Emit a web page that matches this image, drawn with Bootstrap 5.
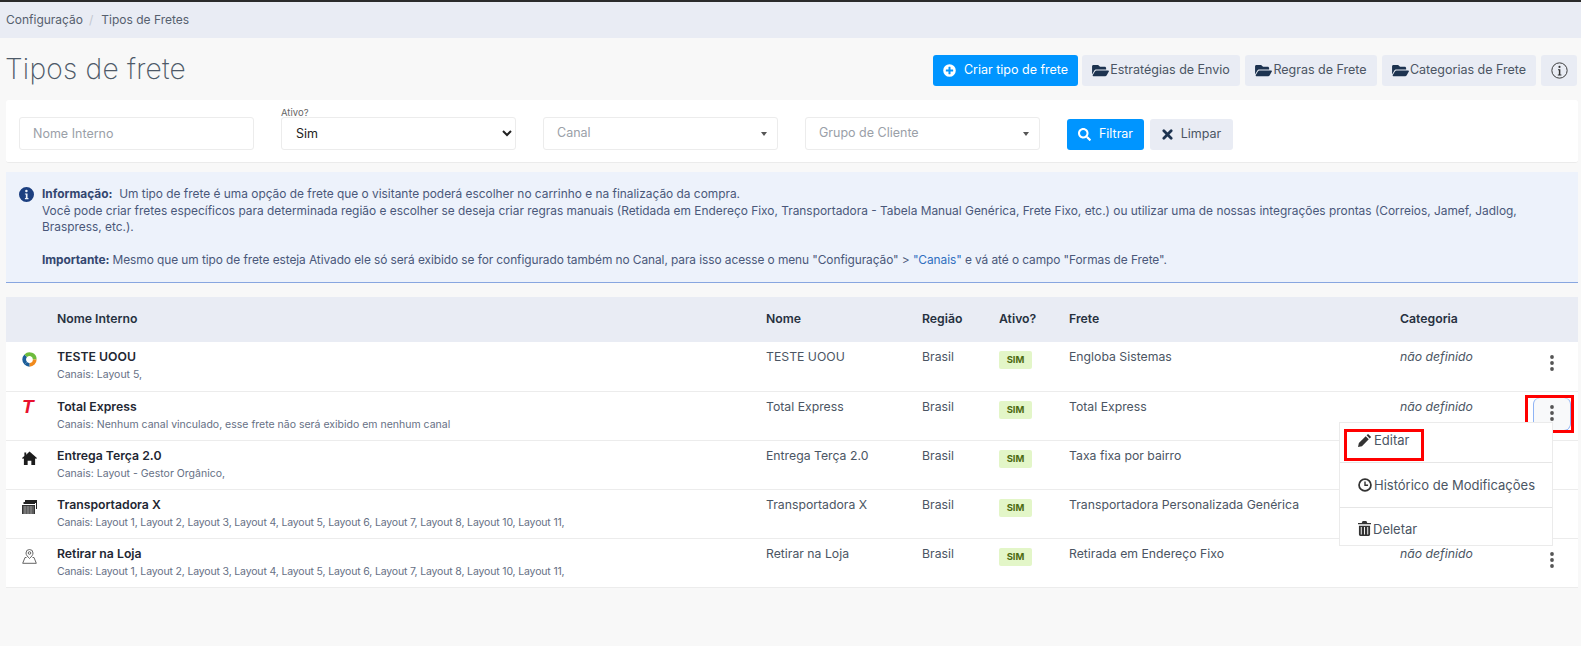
<!DOCTYPE html>
<html lang="pt-BR">
<head>
<meta charset="utf-8">
<title>Tipos de frete</title>
<link href="https://cdn.jsdelivr.net/npm/bootstrap@5.3.0/dist/css/bootstrap.min.css" rel="stylesheet">
<style>
html,body{height:100%}
body{background:#f8f8f8;font-family:Inter,"Noto Sans",sans-serif;font-size:12.25px;color:#4b5563;border-top:2px solid #2b2b2b;overflow:hidden}
svg{flex:none}
svg:not([fill]){fill:currentColor}
.crumbs{background:#e9ecf4;height:36px;padding:0 6px;font-size:12px;margin:0}
.crumbs .breadcrumb-item,.crumbs .breadcrumb-item a{color:#56606e;text-decoration:none}
.crumbs .breadcrumb-item+.breadcrumb-item{padding-left:6px}
.crumbs .breadcrumb-item+.breadcrumb-item::before{color:#c4c8d0;padding-right:8px}
.page{padding:0 3px 0 6px}
.head-row{height:62px}
.head-title{font-family:Inter,sans-serif;font-weight:200;font-size:28.2px;color:#4e5a68;margin:2px 0 0 -1px;letter-spacing:.2px}
.head-btns{gap:5px;margin:3px 1px 0 0}
.act{height:31px;font-size:12.5px;border:0;border-radius:3px;padding:0;display:flex;align-items:center;justify-content:center;gap:1px;background:#e9ecf4;color:#4b5563}
.act:hover,.act:focus{background:#e9ecf4;color:#4b5563}
.act svg{color:#1d3350}
.act-blue,.act-blue:hover,.act-blue:focus{background:#0095ff;color:#fff;gap:8px}
.act-blue svg{color:#fff}
.w-a{width:145px;margin-right:-1px}.w-b{width:158px}.w-c{width:132px}.w-d{width:154px}.w-e{width:36px}
.w-f{width:77px}.w-g{width:83px;gap:8px}
.filter-btns{gap:6px;margin-top:2px}
.filter-box{background:#fff;height:63px;border-bottom:1px solid #ebebeb;border-radius:3px;padding:17px 13px 0;position:relative;gap:27px}
.fld{width:235px;height:33px;border:1px solid #ececec;border-radius:3px;font-size:12.5px;padding:0 10px 0 13px;box-shadow:none}
.fld-ph{color:#9aa0a8}
.fld-ph::placeholder{color:#9aa0a8}
select.fld{appearance:auto;background-image:none;color:#222;padding-left:10px}
.caret-dn{width:0;height:0;border-left:3px solid transparent;border-right:3px solid transparent;border-top:4px solid #555}
.fld-wrap{position:relative}
.fld-label{position:absolute;left:0;top:-9px;font-size:9.5px;line-height:10px;color:#666}
.info-box{background:#edf2fb;margin-top:9px;height:111px;border-bottom:1px solid #88a6e0;padding:14px 13px 0 36px;position:relative;font-size:11.9px;line-height:16.5px;color:#4a587a}
.info-box b{color:#33466f;font-weight:700}
.info-box a{color:#2f6fc0;text-decoration:none}
.info-ico{position:absolute;left:13px;top:15px;color:#1c3f80}
.info-gap{height:16.5px}
.info-last{letter-spacing:-.07px}
.ftable{table-layout:fixed;width:1572px;margin:14px 0 0;background:#fff;color:#4b5563;--bs-table-bg:transparent}
.ftable th{background:#e9ecf4;height:45px;padding:0;vertical-align:middle;font-weight:600;font-size:12.25px;color:#27313f;border:0}
.ftable td{height:49px;padding:6px 0 0;vertical-align:top;border-bottom:1px solid #ececec;font-size:12.25px;line-height:18px;color:#4b5563}
.c1{width:51px}.c2{width:709px}.c3{width:156px}.c4{width:77px}.c5{width:70px}.c6{width:331px}.c7{width:134px}.c8{width:44px}
.ftable td.row-ico{padding-left:16px;color:#1c1c1c}
.row-name{font-weight:600;color:#1f2733;display:block}
.row-sub{font-size:10.5px;line-height:14px;color:#667085;display:block;margin-top:2px}
.row-sub-tight{letter-spacing:-.16px}
.sim{display:inline-flex;align-items:center;justify-content:center;width:33px;height:18px;margin-top:3px;background:#e3f6c8;color:#4e6b12;font-size:9.5px;font-weight:700;border-radius:2px}
.logo-t{font-family:"Liberation Sans",sans-serif;font-style:italic;font-weight:700;font-size:19px;line-height:18px;color:#e8112d}
.kebab{display:flex;align-items:center;justify-content:center;width:36px;height:32px;background:transparent;border:0;padding:0 0 2px;color:#555}
.kebab-on{background:#f8f9fa;border-radius:6px;box-shadow:-1px 0 0 #8fb4f5,0 1px 0 #8fb4f5,1px 0 0 #8fb4f5}
.act-wrap{position:relative;width:36px}
.red-a{position:absolute;left:-9px;top:-3px;width:49px;height:38px;border:3px solid #f00;pointer-events:none}
.opts{position:absolute;right:17px;top:24px;left:auto;width:214px;padding:0;margin:0;border:1px solid #ebebeb;border-radius:0;z-index:5;font-size:13px}
.opts .dropdown-item{display:flex;align-items:center;gap:2px;padding:0 0 0 18px;color:#4b5563;position:relative}
.opts .dropdown-item svg{color:#333}
.opts .dropdown-divider{margin:0;border-color:#e6e6e6;opacity:1}
.it1{height:39px;padding-bottom:4px!important}
.it2{height:44px}
.it3{height:37px;padding-top:5px!important}
.red-b{position:absolute;left:4px;top:6px;width:80px;height:32px;border:3px solid #f00;pointer-events:none}
</style>
</head>
<body>
<nav aria-label="breadcrumb">
  <ol class="breadcrumb crumbs align-items-center">
    <li class="breadcrumb-item"><a href="#">Configuração</a></li>
    <li class="breadcrumb-item active">Tipos de Fretes</li>
  </ol>
</nav>
<div class="page">
  <div class="head-row d-flex align-items-center justify-content-between">
    <h1 class="head-title">Tipos de frete</h1>
    <div class="d-flex head-btns">
      <a class="btn act act-blue w-a" href="#"><svg width="13" height="13" viewBox="0 0 512 512"><path fill-rule="evenodd" d="M256 8a248 248 0 1 0 0 496 248 248 0 0 0 0-496zm144 276a12 12 0 0 1-12 12h-92v92a12 12 0 0 1-12 12h-56a12 12 0 0 1-12-12v-92h-92a12 12 0 0 1-12-12v-56a12 12 0 0 1 12-12h92v-92a12 12 0 0 1 12-12h56a12 12 0 0 1 12 12v92h92a12 12 0 0 1 12 12z"/></svg>Criar tipo de frete</a>
      <a class="btn act w-b" href="#"><svg width="17" height="15" viewBox="0 0 576 512"><path d="M572.694 292.093L500.27 416.248A63.997 63.997 0 0 1 444.989 448H45.025c-18.523 0-30.064-20.093-20.731-36.093l72.424-124.155A64 64 0 0 1 152 256h399.964c18.523 0 30.064 20.093 20.73 36.093zM152 224h328v-48c0-26.51-21.49-48-48-48H272l-64-64H48C21.49 64 0 85.49 0 112v278.046l69.077-118.418C86.214 242.25 117.989 224 152 224z"/></svg>Estratégias de Envio</a>
      <a class="btn act w-c" href="#"><svg width="17" height="15" viewBox="0 0 576 512"><path d="M572.694 292.093L500.27 416.248A63.997 63.997 0 0 1 444.989 448H45.025c-18.523 0-30.064-20.093-20.731-36.093l72.424-124.155A64 64 0 0 1 152 256h399.964c18.523 0 30.064 20.093 20.73 36.093zM152 224h328v-48c0-26.51-21.49-48-48-48H272l-64-64H48C21.49 64 0 85.49 0 112v278.046l69.077-118.418C86.214 242.25 117.989 224 152 224z"/></svg>Regras de Frete</a>
      <a class="btn act w-d" href="#"><svg width="17" height="15" viewBox="0 0 576 512"><path d="M572.694 292.093L500.27 416.248A63.997 63.997 0 0 1 444.989 448H45.025c-18.523 0-30.064-20.093-20.731-36.093l72.424-124.155A64 64 0 0 1 152 256h399.964c18.523 0 30.064 20.093 20.73 36.093zM152 224h328v-48c0-26.51-21.49-48-48-48H272l-64-64H48C21.49 64 0 85.49 0 112v278.046l69.077-118.418C86.214 242.25 117.989 224 152 224z"/></svg>Categorias de Frete</a>
      <a class="btn act w-e" href="#" aria-label="Informação"><svg width="17" height="17" viewBox="0 0 16 16"><circle cx="8" cy="8" r="7.2" fill="none" stroke="#333" stroke-width=".9"/><circle cx="8" cy="4.600" r="1" fill="#333"/><path d="M6.600 6.800h2.200v5h1v1H6.400v-1h1v-4h-.8z" fill="#333"/></svg></a>
    </div>
  </div>

  <form class="filter-box d-flex align-items-start">
    <div class="fld-wrap"><input class="form-control fld fld-ph" placeholder="Nome Interno"></div>
    <div class="fld-wrap"><span class="fld-label">Ativo?</span><select class="form-select fld"><option>Sim</option><option>Não</option></select></div>
    <div class="fld-wrap"><div class="form-control fld fld-ph d-flex align-items-center justify-content-between">Canal<span class="caret-dn"></span></div></div>
    <div class="fld-wrap"><div class="form-control fld fld-ph d-flex align-items-center justify-content-between">Grupo de Cliente<span class="caret-dn"></span></div></div>
    <div class="d-flex filter-btns align-items-start">
      <button type="button" class="btn act act-blue w-f"><svg width="13" height="13" viewBox="0 0 512 512"><path d="M505 442.7L405.3 343c-4.5-4.5-10.6-7-17-7H372c27.6-35.3 44-79.7 44-128C416 93.1 322.9 0 208 0S0 93.1 0 208s93.1 208 208 208c48.3 0 92.7-16.4 128-44v16.3c0 6.4 2.5 12.5 7 17l99.7 99.7c9.4 9.4 24.6 9.4 33.9 0l28.3-28.3c9.4-9.4 9.4-24.6.1-34zM208 336c-70.7 0-128-57.2-128-128 0-70.7 57.2-128 128-128 70.7 0 128 57.2 128 128 0 70.7-57.2 128-128 128z"/></svg>Filtrar</button>
      <button type="button" class="btn act w-g"><svg width="11" height="11" viewBox="0 0 12 12" fill="none"><path d="M2 2l8 8M10 2l-8 8" stroke="#1d3350" stroke-width="3" stroke-linecap="round"/></svg>Limpar</button>
    </div>
  </form>

  <div class="info-box">
    <svg class="info-ico" width="15" height="15" viewBox="0 0 16 16"><path fill-rule="evenodd" d="M8 0a8 8 0 1 0 0 16A8 8 0 0 0 8 0zm-.1 3a1.300 1.300 0 1 1 0 2.700 1.300 1.300 0 0 1 0-2.700zM6.300 6.800h2.800v5h1v1.300H6.300v-1.300h1V8.100h-1z"/></svg>
    <div><b>Informação:</b>&nbsp; Um tipo de frete é uma opção de frete que o visitante poderá escolher no carrinho e na finalização da compra.</div>
    <div>Você pode criar fretes específicos para determinada região e escolher se deseja criar regras manuais (Retidada em Endereço Fixo, Transportadora - Tabela Manual Genérica, Frete Fixo, etc.) ou utilizar uma de nossas integrações prontas (Correios, Jamef, Jadlog,</div>
    <div>Braspress, etc.).</div>
    <div class="info-gap"></div>
    <div class="info-last"><b>Importante:</b> Mesmo que um tipo de frete esteja Ativado ele só será exibido se for configurado também no Canal, para isso acesse o menu "Configuração" &gt; <a href="#">"Canais"</a> e vá até o campo "Formas de Frete".</div>
  </div>

  <table class="table ftable">
    <colgroup><col class="c1"><col class="c2"><col class="c3"><col class="c4"><col class="c5"><col class="c6"><col class="c7"><col class="c8"></colgroup>
    <thead><tr><th></th><th>Nome Interno</th><th>Nome</th><th>Região</th><th>Ativo?</th><th>Frete</th><th>Categoria</th><th></th></tr></thead>
    <tbody>
      <tr>
        <td class="row-ico"><svg class="mt-1" width="15" height="15" viewBox="0 0 20 20" fill="none" stroke-width="5"><path d="M5 15A7 7 0 0 1 5 5" stroke="#1b5e9a"/><path d="M5 5A7 7 0 0 1 17 10" stroke="#6dbb3c"/><path d="M17 10A7 7 0 0 1 10 17" stroke="#f08a1d"/><path d="M10 17A7 7 0 0 1 5 15" stroke="#1b5e9a"/></svg></td>
        <td><span class="row-name">TESTE UOOU</span><span class="row-sub">Canais: Layout 5,</span></td>
        <td>TESTE UOOU</td><td>Brasil</td><td><span class="sim">SIM</span></td><td>Engloba Sistemas</td><td><em>não definido</em></td>
        <td><button type="button" class="kebab" aria-label="Opções"><svg width="4" height="16" viewBox="0 0 4 16"><circle cx="2" cy="2" r="1.900"/><circle cx="2" cy="8" r="1.900"/><circle cx="2" cy="14" r="1.900"/></svg></button></td>
      </tr>
      <tr>
        <td class="row-ico"><span class="logo-t">T</span></td>
        <td><span class="row-name">Total Express</span><span class="row-sub">Canais: Nenhum canal vinculado, esse frete não será exibido em nenhum canal</span></td>
        <td>Total Express</td><td>Brasil</td><td><span class="sim">SIM</span></td><td>Total Express</td><td><em>não definido</em></td>
        <td><div class="act-wrap">
          <button type="button" class="kebab kebab-on" aria-label="Opções"><svg width="4" height="16" viewBox="0 0 4 16"><circle cx="2" cy="2" r="1.900"/><circle cx="2" cy="8" r="1.900"/><circle cx="2" cy="14" r="1.900"/></svg></button>
          <span class="red-a"></span>
          <div class="dropdown-menu show opts">
            <a class="dropdown-item it1" href="#"><svg width="14" height="14" viewBox="0 0 16 16"><path d="M11.500 1l3.500 3.500-1.700 1.700-3.500-3.500zM8.800 3.700l3.500 3.500-7.800 7.800L0 16l1-4.500z"/></svg>Editar</a>
            <span class="red-b"></span>
            <div class="dropdown-divider"></div>
            <a class="dropdown-item it2" href="#"><svg width="14" height="14" viewBox="0 0 16 16" fill="none"><circle cx="8" cy="8" r="6.800" stroke="#333" stroke-width="2"/><path d="M8 4v4.300h3.500" stroke="#333" stroke-width="1.600"/></svg>Histórico de Modificações</a>
            <div class="dropdown-divider"></div>
            <a class="dropdown-item it3" href="#"><svg width="13" height="15" viewBox="0 0 14 16"><path d="M5 0h4l1 2h4v1.500H0V2h4zM1 5h12v9.500a1.500 1.500 0 0 1-1.500 1.500h-9A1.500 1.500 0 0 1 1 14.500zm2 1.500v8h1v-8zm3.500 0v8h1v-8zm3.500 0v8h1v-8z" fill-rule="evenodd"/></svg>Deletar</a>
          </div>
        </div></td>
      </tr>
      <tr>
        <td class="row-ico"><svg class="mt-1" width="15" height="14" viewBox="0 0 16 15"><path d="M8 .5l8 7-1 1.200-1-.8V15h-4v-4.500H6V15H2V7.900l-1 .8-1-1.200 2.500-2.200V1.500h2v2.500z"/></svg></td>
        <td><span class="row-name">Entrega Terça 2.0</span><span class="row-sub">Canais: Layout - Gestor Orgânico,</span></td>
        <td>Entrega Terça 2.0</td><td>Brasil</td><td><span class="sim">SIM</span></td><td>Taxa fixa por bairro</td><td></td><td></td>
      </tr>
      <tr>
        <td class="row-ico"><svg class="mt-1" width="15" height="14" viewBox="0 0 15 14"><path d="M3 0h12v9h-1V3H3z" fill="#222"/><path d="M1.500 2H13v2H1.500z" fill="#222"/><path d="M0 5h13v9H0z" fill="#333"/><path d="M1 7h11M1 9h11M1 11h11M1 13h11M3 6v8M6 6v8M9 6v8" stroke="#aaa" stroke-width=".7" fill="none"/></svg></td>
        <td><span class="row-name">Transportadora X</span><span class="row-sub row-sub-tight">Canais: Layout 1, Layout 2, Layout 3, Layout 4, Layout 5, Layout 6, Layout 7, Layout 8, Layout 10, Layout 11,</span></td>
        <td>Transportadora X</td><td>Brasil</td><td><span class="sim">SIM</span></td><td>Transportadora Personalizada Genérica</td><td></td><td></td>
      </tr>
      <tr>
        <td class="row-ico"><svg class="mt-1" width="15" height="15" viewBox="0 0 15 15" fill="none" stroke="#555" stroke-width=".9"><path d="M7.500 9.500C5.500 7.500 4 6 4 4a3.500 3.500 0 0 1 7 0c0 2-1.500 3.500-3.500 5.500z"/><circle cx="7.500" cy="4" r="1.300"/><path d="M4.500 8.500H3L.7 14.300h13.600L12 8.500h-1.500"/></svg></td>
        <td><span class="row-name">Retirar na Loja</span><span class="row-sub row-sub-tight">Canais: Layout 1, Layout 2, Layout 3, Layout 4, Layout 5, Layout 6, Layout 7, Layout 8, Layout 10, Layout 11,</span></td>
        <td>Retirar na Loja</td><td>Brasil</td><td><span class="sim">SIM</span></td><td>Retirada em Endereço Fixo</td><td><em>não definido</em></td>
        <td><button type="button" class="kebab" aria-label="Opções"><svg width="4" height="16" viewBox="0 0 4 16"><circle cx="2" cy="2" r="1.900"/><circle cx="2" cy="8" r="1.900"/><circle cx="2" cy="14" r="1.900"/></svg></button></td>
      </tr>
    </tbody>
  </table>
</div>
<script src="https://cdn.jsdelivr.net/npm/bootstrap@5.3.0/dist/js/bootstrap.bundle.min.js"></script>
</body>
</html>
